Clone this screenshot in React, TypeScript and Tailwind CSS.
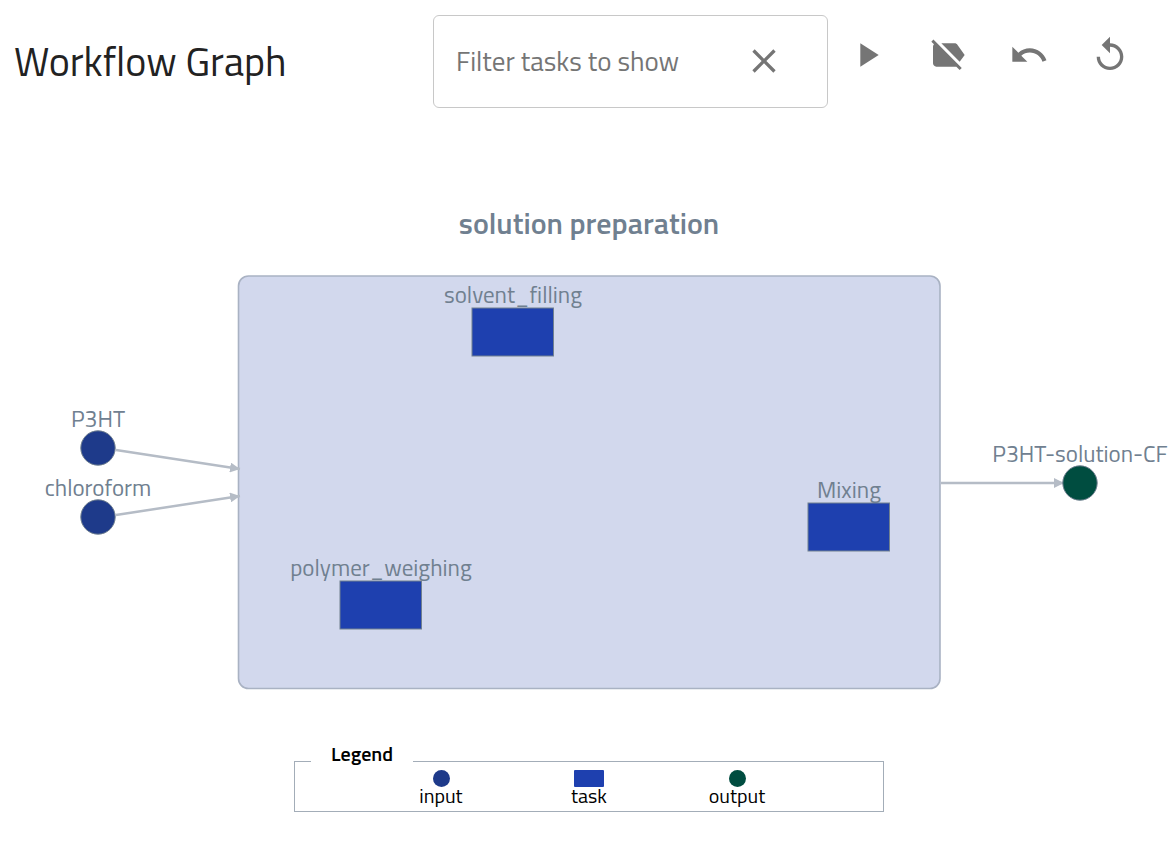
import { useState } from "react";
import { MdClose, MdLabelOff, MdPlayArrow, MdReplay, MdUndo } from "react-icons/md";

const actions = [
  { label: "Run layout", Icon: MdPlayArrow },
  { label: "Toggle labels", Icon: MdLabelOff },
  { label: "Undo", Icon: MdUndo },
  { label: "Reset", Icon: MdReplay },
];

const circles = [
  { name: "P3HT", x: 98, y: 448, fill: "#1e3a8a" },
  { name: "chloroform", x: 98, y: 517, fill: "#1e3a8a" },
  { name: "P3HT-solution-CF", x: 1080, y: 483, fill: "#004d40" },
];

const tasks = [
  { name: "solvent_filling", x: 472, y: 308 },
  { name: "Mixing", x: 808, y: 503 },
  { name: "polymer_weighing", x: 340, y: 581 },
];

const edges = [
  { x1: 116, y1: 450, x2: 240, y2: 469 },
  { x1: 116, y1: 515, x2: 240, y2: 496 },
  { x1: 941, y1: 483, x2: 1064, y2: 483 },
];

const legendItems = [
  { name: "input", swatch: "w-[17px] rounded-full bg-[#1e3a8a]" },
  { name: "task", swatch: "w-[30px] rounded-[1px] bg-[#1e40af]" },
  { name: "output", swatch: "w-[17px] rounded-full bg-[#004d40]" },
];

function Toolbar() {
  const [filter, setFilter] = useState("");
  return (
    <header className="flex items-start pt-[15px] pr-[18px] pl-[14px]">
      <h1 className="flex-1 self-center text-[40px] leading-[48px] text-[#222222]">Workflow Graph</h1>
      <div className="flex h-[93px] w-[395px] items-center rounded-md border border-[#c8c8c8] pr-[43px] pb-0.5 pl-[22px]">
        <input
          type="text"
          aria-label="Filter tasks to show"
          placeholder="Filter tasks to show"
          value={filter}
          onChange={(e) => setFilter(e.target.value)}
          className="min-w-0 flex-1 text-[27px] leading-8 text-[#222222] outline-none placeholder:text-[#757575]"
        />
        <button type="button" aria-label="Clear filter" onClick={() => setFilter("")} className="text-[#757575]">
          <MdClose size={40} />
        </button>
      </div>
      <div className="-ml-0.5 flex">
        {actions.map(({ label, Icon }) => (
          <button
            key={label}
            type="button"
            aria-label={label}
            className="flex h-20 w-[81px] items-center justify-center text-[#757575]"
          >
            <Icon size={40} />
          </button>
        ))}
      </div>
    </header>
  );
}

function Graph() {
  return (
    <svg viewBox="0 108 1168 639" className="block h-auto w-full" role="img" aria-label="Workflow graph">
      <defs>
        <marker id="arrow" markerUnits="userSpaceOnUse" markerWidth="10" markerHeight="10" refX="10" refY="5" orient="auto">
          <path d="M0 0 10 5 0 10z" fill="#b5bcc6" />
        </marker>
      </defs>
      <rect x="238.5" y="276" width="701.5" height="412.5" rx="10" fill="#d2d8ed" stroke="#a9b2c3" strokeWidth="1.6" />
      <text x="589" y="234" textAnchor="middle" fill="#708090" className="text-[30px] font-semibold">
        solution preparation
      </text>
      {edges.map((e) => (
        <line key={`${e.x1}-${e.y1}`} {...e} stroke="#b5bcc6" strokeWidth="2.5" markerEnd="url(#arrow)" />
      ))}
      {tasks.map((t) => (
        <g key={t.name}>
          <rect x={t.x} y={t.y} width="81.5" height="48" fill="#1e40af" stroke="#708090" strokeWidth="1" />
          <text x={t.x + 41} y={t.y - 5} textAnchor="middle" fill="#708090" className="text-[23px]">
            {t.name}
          </text>
        </g>
      ))}
      {circles.map((c) => (
        <g key={c.name}>
          <circle cx={c.x} cy={c.y} r="17.2" fill={c.fill} stroke="#708090" strokeWidth="1" />
          <text x={c.x} y={c.y - 21} textAnchor="middle" fill="#708090" className="text-[23px]">
            {c.name}
          </text>
        </g>
      ))}
    </svg>
  );
}

function Legend() {
  return (
    <div className="pl-2.5">
      <fieldset className="mx-auto flex w-[590px] max-w-full border border-[#a3adb8] px-[72px] pb-1.5">
        <legend className="-ml-14 px-5 pb-3.5 text-[20px] leading-[14px] font-semibold text-black">Legend</legend>
        {legendItems.map(({ name, swatch }) => (
          <div key={name} className="-mt-[5px] flex flex-1 flex-col items-center">
            <span className={`h-[17px] ${swatch}`} />
            <span className="text-[20px] leading-[18px] text-black">{name}</span>
          </div>
        ))}
      </fieldset>
    </div>
  );
}

export default function App() {
  return (
    <main className="overflow-hidden bg-white font-['Titillium_Web','Roboto',sans-serif]">
      <Toolbar />
      <Graph />
      <Legend />
    </main>
  );
}
